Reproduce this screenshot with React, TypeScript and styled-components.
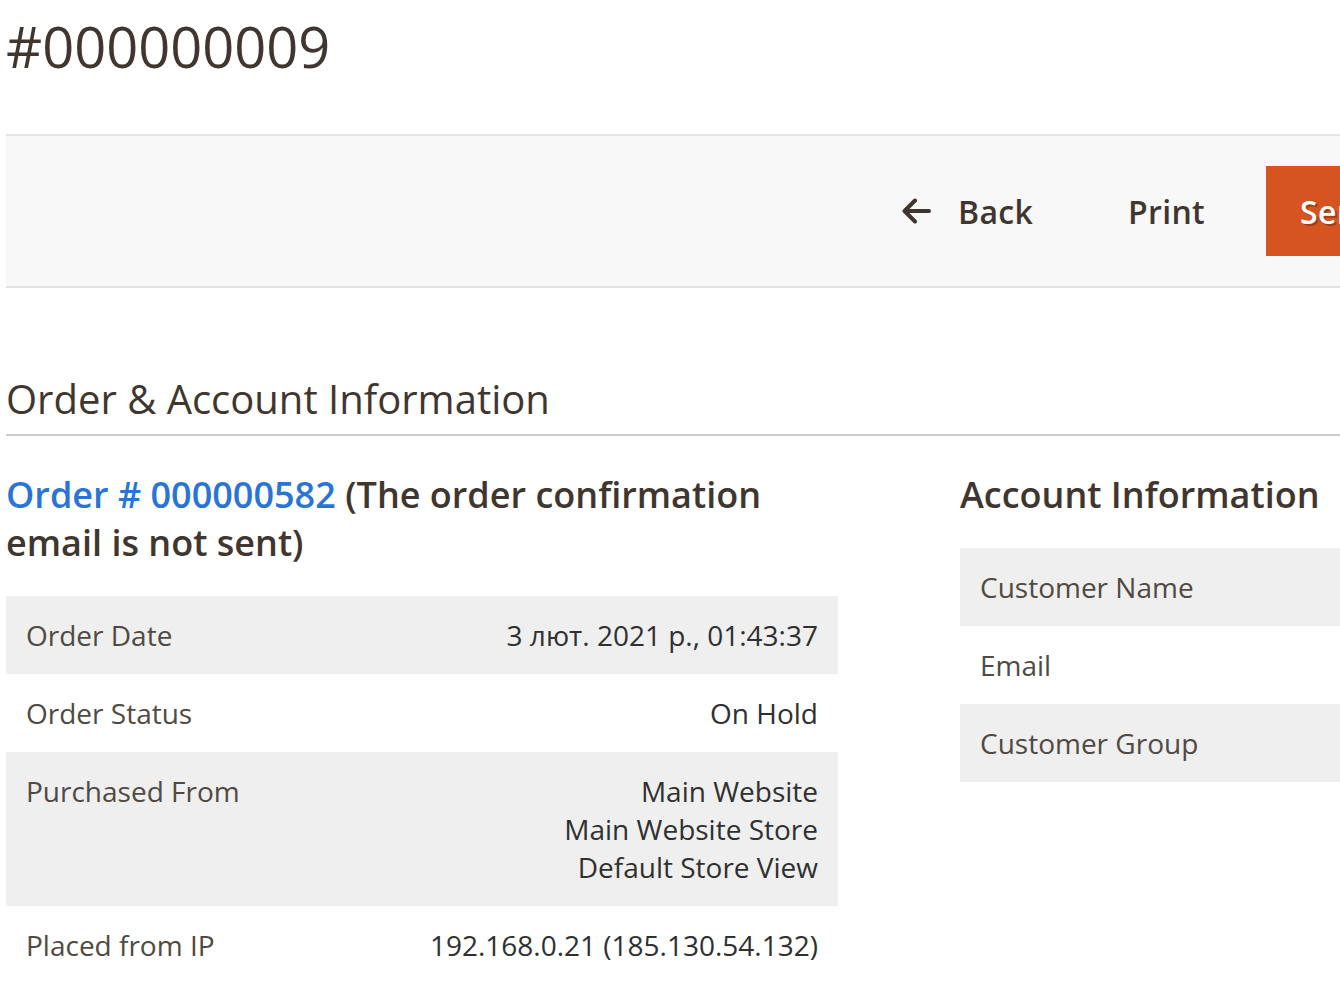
import React from "react";
import styled, { createGlobalStyle } from "styled-components";

const GlobalStyle = createGlobalStyle`
  html, body {
    margin: 0;
    padding: 0;
    overflow: hidden;
    background: #ffffff;
  }
  body {
    font-family: "Open Sans", "Noto Sans", sans-serif;
    color: #303030;
  }
  * { box-sizing: content-box; }
`;

const Page = styled.div`
  width: 1770px;
  padding: 8px 0 0 6px;
`;

const PageTitle = styled.h1`
  margin: 0;
  font-size: 56px;
  line-height: 76px;
  font-weight: 400;
  color: #41362f;
`;

const Toolbar = styled.div`
  margin-top: 50px;
  height: 150px;
  background: #f8f8f8;
  border-top: 2px solid #e3e3e3;
  border-bottom: 2px solid #e3e3e3;
  display: flex;
  align-items: center;
  justify-content: flex-end;
  padding-right: 30px;
`;

const ActionButton = styled.button<{ $after?: number }>`
  display: flex;
  align-items: center;
  gap: 27px;
  height: 90px;
  padding: 0 30px;
  margin: 0 ${(p) => p.$after ?? 0}px 0 0;
  border: none;
  background: transparent;
  font-family: "Open Sans", "Noto Sans", sans-serif;
  font-size: 32px;
  font-weight: 600;
  letter-spacing: 0.3px;
  color: #41362f;
  cursor: pointer;
`;

const PrimaryButton = styled.button`
  display: flex;
  align-items: center;
  width: 446px;
  height: 90px;
  padding: 0 0 0 34px;
  border: none;
  background: #d5541f;
  font-family: "Open Sans", "Noto Sans", sans-serif;
  font-size: 32px;
  font-weight: 600;
  letter-spacing: 0.3px;
  color: #ffffff;
  text-shadow: 2px 2px 0 rgba(0, 0, 0, 0.25);
  white-space: nowrap;
  cursor: pointer;
`;

const Section = styled.section`
  margin-top: 87px;
`;

const SectionTitle = styled.h2`
  margin: 0;
  padding-bottom: 11px;
  border-bottom: 2px solid #cccccc;
  font-size: 40px;
  line-height: 48px;
  font-weight: 400;
  color: #41362f;
`;

const Columns = styled.div`
  margin-top: 35px;
  display: grid;
  grid-template-columns: 832px 1fr;
  column-gap: 122px;
  align-items: start;
`;

const ItemTitle = styled.h3`
  margin: 0 0 29px;
  font-size: 36px;
  line-height: 48px;
  font-weight: 600;
  color: #41362f;
`;

const OrderLink = styled.a`
  color: #2a74d6;
  text-decoration: none;
`;

const InfoTable = styled.table`
  width: 100%;
  border-collapse: collapse;
  border-spacing: 0;

  tr:nth-child(odd) {
    background: #efefef;
  }
`;

const Label = styled.th`
  padding: 20px;
  font-size: 28px;
  line-height: 38px;
  font-weight: 400;
  color: #514943;
  text-align: left;
  vertical-align: top;
  white-space: nowrap;
`;

const Value = styled.td`
  padding: 20px;
  font-size: 28px;
  line-height: 38px;
  color: #303030;
  text-align: right;
  vertical-align: top;
`;

const BackArrow = () => (
  <svg width="30" height="26" viewBox="0 0 30 26" fill="none">
    <path
      d="M28 13H4M14 2.5L3.5 13L14 23.5"
      stroke="#41362f"
      strokeWidth="4"
      strokeLinecap="round"
      strokeLinejoin="round"
    />
  </svg>
);

const orderRows: { label: string; value: React.ReactNode }[] = [
  { label: "Order Date", value: "3 лют. 2021 р., 01:43:37" },
  { label: "Order Status", value: "On Hold" },
  {
    label: "Purchased From",
    value: (
      <>
        Main Website
        <br />
        Main Website Store
        <br />
        Default Store View
      </>
    ),
  },
  { label: "Placed from IP", value: "192.168.0.21 (185.130.54.132)" },
];

const accountRows = ["Customer Name", "Email", "Customer Group"];

export default function App() {
  return (
    <Page>
      <GlobalStyle />
      <PageTitle>#000000009</PageTitle>
      <Toolbar>
        <ActionButton $after={35}>
          <BackArrow />
          <span>Back</span>
        </ActionButton>
        <ActionButton $after={31}>Print</ActionButton>
        <PrimaryButton>Send Tracking Information</PrimaryButton>
      </Toolbar>
      <Section>
        <SectionTitle>Order &amp; Account Information</SectionTitle>
        <Columns>
          <div>
            <ItemTitle>
              <OrderLink href="#">Order # 000000582</OrderLink> (The order
              confirmation email is not sent)
            </ItemTitle>
            <InfoTable>
              <tbody>
                {orderRows.map((r) => (
                  <tr key={r.label}>
                    <Label>{r.label}</Label>
                    <Value>{r.value}</Value>
                  </tr>
                ))}
              </tbody>
            </InfoTable>
          </div>
          <div>
            <ItemTitle>Account Information</ItemTitle>
            <InfoTable>
              <tbody>
                {accountRows.map((l) => (
                  <tr key={l}>
                    <Label>{l}</Label>
                    <Value />
                  </tr>
                ))}
              </tbody>
            </InfoTable>
          </div>
        </Columns>
      </Section>
    </Page>
  );
}
